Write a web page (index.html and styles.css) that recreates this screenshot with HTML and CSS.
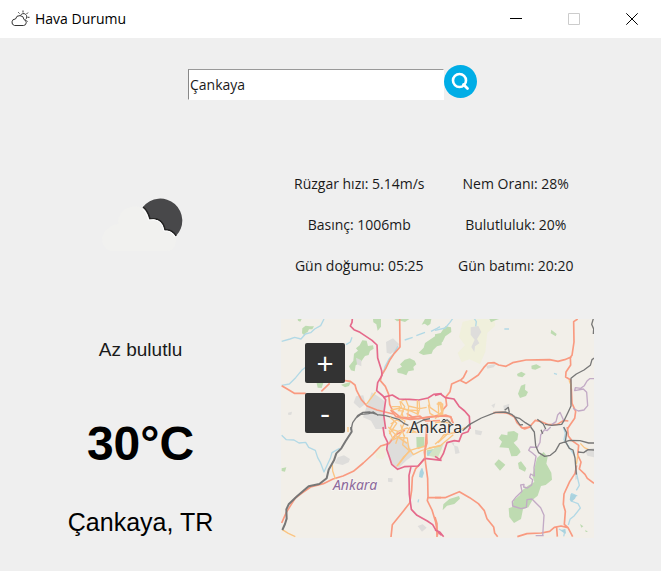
FILE: index.html
```html
<!DOCTYPE html>
<html lang="tr">
<head>
<meta charset="utf-8">
<meta name="viewport" content="width=device-width, initial-scale=1">
<title>Hava Durumu</title>
<link rel="stylesheet" href="styles.css">
</head>
<body>
<header class="titlebar">
  <svg class="app-icon" viewBox="0 0 20 18" aria-hidden="true">
    <path d="M4.500 15.500H13.500A3 3 0 0 0 14 9.600A4.300 4.300 0 0 0 5.500 9A3.300 3.300 0 0 0 4.500 15.500Z"/>
    <path d="M10.500 5.500A3.300 3.300 0 1 1 15.500 9.500M13 2.500V0.500M9.500 3.500L8.300 2.300M16.500 4L18 2.500M17.500 7.300H19.500M16.500 10.500L17.600 11.500"/>
  </svg>
  <h1 class="title">Hava Durumu</h1>
  <div class="window-controls">
    <button class="window-button" type="button" aria-label="Simge durumuna küçült"><svg viewBox="0 0 12 12"><path d="M0 5.500H12"/></svg></button>
    <button class="window-button" type="button" aria-label="Ekranı kapla" disabled><svg viewBox="0 0 12 12"><path d="M.5 .5H11.500V11.500H.5Z"/></svg></button>
    <button class="window-button" type="button" aria-label="Kapat"><svg viewBox="0 0 12 12"><path d="M.3 .3L11.700 11.700M11.700 .3L.3 11.700"/></svg></button>
  </div>
</header>
<main class="content">
  <form class="search">
    <input class="search-input" type="text" value="Çankaya" aria-label="Şehir">
    <button class="search-button" type="button" aria-label="Ara">
      <svg viewBox="0 0 33 33"><circle cx="16.500" cy="16.500" r="16.500" fill="#00ade6"/><circle cx="15.500" cy="15.500" r="6.500" fill="none" stroke="#fff" stroke-width="2.600"/><path d="M19.500 19.500L23.500 23.500" stroke="#fff" stroke-width="2.800" stroke-linecap="round"/></svg>
    </button>
  </form>
  <div class="weather">
    <section class="current">
      <svg class="weather-icon" viewBox="0 0 110 70" aria-hidden="true">
        <path d="M53 18A22 22 0 1 1 86 47Q82 40 75 41Q73 28 60 30Q58 22 53 18Z" fill="#48484a"/>
        <path d="M53 18Q58 22 60 30Q73 28 75 41Q82 40 86 47" fill="none" stroke="#222" stroke-width="1.500"/>
        <path d="M20 62A12 12 0 0 1 13 46Q17 36 28 35Q28 21 40 18Q54 14 59 31Q72 28 74 42Q87 42 86 53Q85 62 77 62Z" fill="#f1f1ef"/>
        <path d="M53 20Q57 24 58.500 31Q72 28.500 74 42Q81 41 85 48" fill="none" stroke="#fff" stroke-width="1"/>
      </svg>
      <p class="description">Az bulutlu</p>
      <p class="temperature">30°C</p>
      <p class="city">Çankaya, TR</p>
    </section>
    <section class="details">
      <ul class="facts">
        <li>Rüzgar hızı: 5.14m/s</li>
        <li>Nem Oranı: 28%</li>
        <li>Basınç: 1006mb</li>
        <li>Bulutluluk: 20%</li>
        <li>Gün doğumu: 05:25</li>
        <li>Gün batımı: 20:20</li>
      </ul>
      <div class="map">
        <svg class="map-view" viewBox="0 0 939 657" role="img" aria-label="Ankara haritası">
          <rect width="939" height="657" fill="#f2efe9"/>
          <!-- north-west: terrain -->
          <g transform="translate(-18 -15)">
            <g class="wood">
              <path d="M82 43L92 35L104 37L117 37L112 46L102 46L98 54L91 58L90 65L81 58Z"/>
              <path d="M68 15H80L76 23L69 20ZM294 15H318V38L308 50L304 31L295 25ZM358 15H403L390 24L376 20L366 22ZM450 15H469L466 30L458 35L449 29L440 32Z"/>
              <path d="M262 79L275 80L279 96L294 94L296 104L285 111L281 123L270 126L257 145L242 154L239 172L228 169L222 157L235 140L237 119L249 110L243 103L254 94Z"/>
              <path d="M389 137L404 133L419 140L424 151L415 159L417 169L400 172L394 184L382 179L368 176L366 166L381 158L375 151Z"/>
              <path d="M480 67L500 60V93L486 97L474 109L470 119L445 123L431 116L446 101L450 87Z"/>
              <path d="M124 203L145 207L140 222L128 221ZM198 212L228 203L222 216L210 220Z"/>
            </g>
            <path class="urban" d="M290 235L309 247L327 260L328 300L330 345H302L288 320L264 310L272 286ZM243 247L265 244L271 270L254 283L236 266ZM333 84L354 73L372 90L367 105L347 120L335 116ZM243 131L259 139V157L246 151ZM39 296L51 293L49 302L40 303Z"/>
            <path class="water" d="M20 82L45 75L59 70L78 75L91 60L107 56L119 45L137 35L147 15M20 214L43 210L62 191L80 169L94 158M213 92L226 84L231 70M369 96L356 119L342 135L330 158L325 178M389 78L413 70M424 65L450 55M468 52L486 43L495 38"/>
          </g>
          <!-- north-east: terrain -->
          <g transform="translate(462 -15)">
            <path class="meadow" d="M83 23L130 13L178 17L181 35L157 56L151 113L135 150L103 136L80 145L68 117L90 94L72 69Z"/>
            <path class="wood" d="M0 61L17 57L31 37L48 40L49 54L31 67L23 83L0 98ZM162 13H198L181 19L168 25ZM349 47L365 60L362 67L347 58ZM289 155L304 151L319 159L301 167L290 165ZM246 180L259 173L272 180L262 190L248 187ZM258 215L271 210L270 227L279 234L273 246L255 252L249 239Z"/>
            <path class="urban" d="M107 40L130 36L139 54L126 75L133 88L120 97L118 114L109 99L119 77L107 62ZM154 155L184 149L176 160L157 164ZM169 274L181 268L177 283ZM205 275L223 269L220 288H207Z"/>
            <path class="water" d="M0 49L31 42L45 25L53 14M118 14L124 23L122 37M208 45H222M357 178L366 181"/>
          </g>
          <!-- south-west: terrain -->
          <g transform="translate(-18 324)">
            <path class="meadow" d="M300 73L327 52L334 82L325 97L304 94ZM480 65H505V98L470 92Z"/>
            <path class="urban" d="M345 35L372 25L400 48L415 85L395 100L370 124L347 108L335 61ZM188 91L207 85L225 96L221 106L203 114L179 109ZM428 297L443 292L455 302L441 314ZM339 153L353 154L352 166L339 164Z"/>
            <path class="wood" d="M20 124L34 121L30 134L20 132ZM424 30H448V61L425 62ZM455 70L480 65L480 86H456Z"/>
            <path class="water" d="M20 25L34 38L57 39L72 48L92 46L101 61L121 70L128 92L136 106L147 135L166 94L171 77L194 64M457 76L477 72M436 145L440 124M431 217L429 226"/>
            <path class="lake" d="M434 134L442 123L447 138L442 153L432 150ZM456 77L476 70L478 84L459 87Z"/>
          </g>
          <!-- south-east: terrain -->
          <g transform="translate(462 324)">
            <path class="park" d="M0 60L26 50L19 68L8 92L-20 86Z"/>
            <path class="wood" d="M199 22L217 25L218 14L237 12L250 20L247 38L236 47L252 65L257 75L246 87L229 88L221 63L193 61L201 44L191 34ZM178 111L191 97L211 113L195 131ZM249 108L258 103L274 124L270 134L252 125Z"/>
            <path class="wood" d="M306 93L326 75L338 90L334 110L349 137L351 158L332 174L318 177L308 206L293 218L280 241L264 247L258 276L237 288L223 270L221 244L232 240L236 220L254 205L262 190L279 176L298 165L292 145L300 117Z"/>
            <path class="wood" d="M72 207L75 215L58 231L36 236L23 250L25 232L43 216ZM435 291L445 298L439 302ZM451 308L459 315L452 315Z"/>
            <path class="urban" d="M57 55L69 59L74 78L61 81ZM48 45L58 47L56 58ZM120 8L142 13L138 25L121 22ZM450 68L477 63V91L457 86ZM420 137L429 153L421 160Z"/>
            <path class="water" d="M385 0L391 19L387 38L402 60L418 85M422 120L427 150L433 175L424 190M400 294L405 277L418 266L436 243L429 230L408 222L410 200L427 207M372 306L389 316L386 328"/>
            <path class="lake" d="M407 201L425 205L420 215L410 224L404 218ZM377 310L391 305L393 320L384 316Z"/>
          </g>
          <!-- Roads -->
          <g transform="translate(-18 -15)">
            <path class="road" d="M374 14L375 99L358 118L345 137L332 164L320 183L316 200L331 217L341 241L344 271L354 292L375 309L430 314L495 303M20 215L33 223L58 238H92M139 232L164 208M205 199L226 202L240 213L245 230L259 257L276 276L306 288L355 300M395 298L412 309L434 306L453 321L495 320"/>
            <path class="street" d="M274 271L302 234M375 261L379 280L370 290L385 291L374 312L390 321L380 345M379 261L392 256L400 276L434 284L455 280M371 281L400 288L432 290M401 277L398 310M432 261L434 284L428 305M460 255L465 280L494 300M347 330L365 318L378 323M350 278H375"/>
            <path class="highway" d="M232 14L231 25L226 36L237 47L255 55L273 67L291 79L306 93L308 132L320 170L321 184L308 206L305 230L324 246L332 257L326 302L332 345M324 250L352 243L372 255L403 256L431 258L459 252L476 241L500 239"/>
            <path class="rail" d="M228 348L233 326L248 305L264 295L283 294L308 302L332 305L371 316L388 329L400 334M240 314L258 301L281 299L295 294L310 304"/>
          </g>
          <g transform="translate(462 -15)">
            <path class="road" d="M428 15L416 23L417 84L411 124L406 130L407 153L393 174L392 189L406 197L409 226L411 268L422 292L419 313L405 333L397 345M410 128L389 137L369 142L344 137L273 138L233 146L213 157L191 153L178 146L159 147L146 161L130 183L93 208L75 199L50 210L45 233L32 250L35 274L23 288L20 302L0 307M76 199L85 191L96 169M13 306L32 303L48 310L52 323M175 296L201 295L219 298L238 309L246 326L262 342L283 339L301 319L319 323L341 332L367 331L386 319L400 321"/>
            <path class="street" d="M10 265H18L20 295L11 307ZM25 286L14 302L0 314M0 327L25 322L43 328M402 199L408 212L407 225"/>
            <path class="highway" d="M0 244L17 240L31 251L57 255L72 277L89 291L103 307L105 345"/>
            <path class="border" d="M478 194L464 194L456 201L448 215L437 223L421 221L419 230L445 225L455 235L458 275L447 288L430 291L414 283M387 322L375 295L368 303L363 323L350 332"/>
            <path class="rail" d="M83 350L104 331L139 312L182 295L211 294L230 301L239 309L253 313L271 326L289 337M209 289L220 280L223 296M236 305L255 333L264 332M307 316L325 330L332 345M330 331L350 334L380 331L387 320L400 293L408 276V193L424 180L447 168L466 154L471 137L478 132M475 14L470 31L476 45L475 60"/>
          </g>
          <g transform="translate(-18 324)">
            <path class="road" d="M390 10L362 23L343 49L317 57L294 81L265 108L235 133L204 147L174 156L145 170L107 180L83 197L61 213L47 235L34 256L20 288M447 98L422 125L412 151L410 190L404 228L386 251L352 293L348 330M454 0L456 48L448 74L452 111L458 155L459 209L457 221L471 249L482 285L488 325M457 211L498 212"/>
            <path class="street" d="M172 113L173 132L181 156M22 308L40 319L61 329M219 0V15M342 10L355 38L370 30L382 13M362 50L369 31L397 33L401 63L415 83L439 71L495 55M365 118L385 91L406 71M340 0L366 28L396 49M405 0L396 17L421 15M428 65L453 56"/>
            <path class="highway" d="M324 0L328 26L338 46L335 67L344 93L350 112L368 127L388 119L430 117L449 94L500 100M408 119L402 145L403 202L409 247L426 265L457 282L473 293L483 310L500 325"/>
            <path class="rail thick" d="M228 0L230 14L212 42L199 64L184 79L177 100L161 128L155 154L133 171L101 178L66 208L41 232L34 247L35 275L30 291L22 309"/>
          </g>
          <g transform="translate(462 324)">
            <path class="road" d="M257 0L269 6L285 0M0 212H30L73 194L104 212L130 230L148 251L156 275L176 300L179 318L188 329M0 270L6 290V330M397 0L400 27L410 40L431 55L428 84L438 105L433 126L450 142L457 154L477 169M425 115L420 139L404 164L387 201L385 232L391 253L388 292L399 302L413 329M247 329L276 320L319 318L344 313L358 301L378 297L399 302M365 302L367 329"/>
            <path class="street" d="M0 52L14 40L26 24L66 15L92 0M436 49L448 62L461 68M429 83L424 112"/>
            <path class="highway" d="M0 88L15 98L25 80L36 47L58 41L72 43L81 20L99 14L105 0M0 308L15 316L26 329"/>
            <path class="border" d="M347 0L336 11L329 8L317 24L315 46L307 61L286 60L281 70L293 79L303 88L297 122L298 147L287 141L284 151L293 158L290 174L277 183L266 180L267 172L257 174L261 193L244 209L232 224L233 237L258 245L274 241L276 218L291 216L305 230L317 242L327 265L323 327M302 326H326"/>
            <path class="rail" d="M287 0L298 15L302 56L311 77L329 88L346 85L361 73L374 50L404 40L435 41L461 48H477M386 0L395 17L391 43L403 64L414 69L420 93L424 143M429 75L446 77L459 68L477 69M318 8L323 20"/>
          </g>
          <!-- city centre -->
          <g transform="translate(267 195)">
            <path class="street" d="M62 78L92 72L125 82L142 90M92 52L104 68L96 86L100 104M142 48V92M175 62L180 88L200 100M208 55L216 84L205 100M200 60H218V92H204M60 100L80 118L58 150M72 112L60 134L84 142L66 168M84 142L112 132L140 146M104 152L98 182L118 200L84 244M118 200L150 190M176 192L210 186L250 152M240 110L232 150L204 176M92 122L102 156"/>
            <path class="road" d="M62 78L78 98L120 106L215 96L242 98L250 118M172 118L168 160L164 224"/>
            <path class="rail" d="M132 122L160 108L180 104M214 114L232 108L244 120M282 136L302 120"/>
          </g>
          <text class="place" x="385" y="341">Ankara</text>
          <circle class="place-dot" cx="489" cy="305" r="4"/>
          <text class="province" x="156" y="512">Ankara</text>
        </svg>
        <div class="map-controls">
          <button class="map-button" type="button" aria-label="Yakınlaştır">+</button>
          <button class="map-button" type="button" aria-label="Uzaklaştır">-</button>
        </div>
      </div>
    </section>
  </div>
</main>
</body>
</html>
```
FILE: styles.css
```css
* { box-sizing: border-box; }

body {
  margin: 0;
  min-height: 100vh;
  background: #efefef;
  color: #1a1a1a;
  font: 14px/20px "Open Sans", "Noto Sans", sans-serif;
}

button {
  padding: 0;
  border: 0;
  background: none;
}

.titlebar {
  display: flex;
  align-items: center;
  height: 38px;
  padding-left: 10px;
  background: #fff;
}

.app-icon {
  width: 20px;
  height: 18px;
  fill: none;
  stroke: #333;
}

.title {
  margin: 0 auto 0 5px;
  color: #000;
  font-size: 14px;
  font-weight: 400;
}

.window-controls { display: flex; }

.window-button {
  display: grid;
  place-items: center;
  width: 58px;
  height: 38px;
}

.window-button svg {
  width: 12px;
  height: 12px;
  fill: none;
  stroke: #000;
}

.window-button:disabled svg { stroke: #ccc; }

.content { padding-top: 27px; }

.search {
  display: flex;
  justify-content: center;
  padding-left: 4px;
}

.search-input {
  width: 256px;
  height: 31px;
  margin-top: 4px;
  padding: 0 1px;
  border: 1px solid #fff;
  border-top-color: #999;
  border-left-color: #888;
  border-radius: 0;
  background: #fff;
  color: #1a1a1a;
  font: inherit;
}

.search-button {
  width: 33px;
  height: 33px;
}

.search-button svg { display: block; }

.weather {
  display: grid;
  grid-template-columns: 281fr 313fr 67fr;
  margin-top: 63px;
}

.current {
  display: flex;
  flex-direction: column;
  align-items: center;
  color: #000;
  font-family: "Liberation Sans", Arial, sans-serif;
}

.current p { margin: 0; }

.weather-icon {
  width: 110px;
  height: 70px;
  margin: 26px 0 79px 8px;
}

.description {
  color: #1a1a1a;
  font-size: 19px;
  line-height: 24px;
}

.current .temperature {
  margin: 54px 0 32px;
  font-size: 48px;
  font-weight: 700;
  line-height: 56px;
}

.city {
  font-size: 25px;
  line-height: 36px;
}

.facts {
  display: grid;
  grid-template-columns: 1fr 1fr;
  margin: 0 0 33px;
  padding: 0;
  list-style: none;
  line-height: 41px;
  text-align: center;
}

.map { position: relative; }

.map-view {
  display: block;
  width: 100%;
}

.map-view path {
  stroke-linejoin: round;
}

.wood { fill: #bedbb1; }
.park { fill: #d3e3c4; }
.urban { fill: #dedddb; }
.meadow { fill: #f0f0dc; }
.lake { fill: #aad3df; }

.water,
.road,
.street,
.highway,
.border,
.rail {
  fill: none;
  stroke-width: 4px;
}

.water { stroke: #b2d9e6; }
.road { stroke: #f99a80; stroke-width: 5px; }
.street { stroke: #fbc583; }
.highway { stroke: #e5698b; stroke-width: 5px; }
.border { stroke: #c2aac5; }
.rail { stroke: #777; }
.rail.thick { stroke-width: 6px; }

.place,
.province {
  font-family: "Noto Sans", sans-serif;
  stroke: #fff;
  stroke-opacity: .5;
  stroke-width: 4px;
  paint-order: stroke;
}

.place {
  fill: #333;
  font-size: 48px;
}

.place-dot {
  fill: #ccc;
  stroke: #444;
  stroke-width: 3px;
}

.province {
  fill: #8d6a9b;
  font-size: 42px;
  font-style: italic;
}

.map-controls {
  position: absolute;
  top: 24px;
  left: 24px;
  display: grid;
  gap: 10px;
}

.map-button {
  width: 40px;
  height: 40px;
  border-radius: 2px;
  background: #333;
  color: #fff;
  font: 30px/40px "Open Sans", "Noto Sans", sans-serif;
}
```
